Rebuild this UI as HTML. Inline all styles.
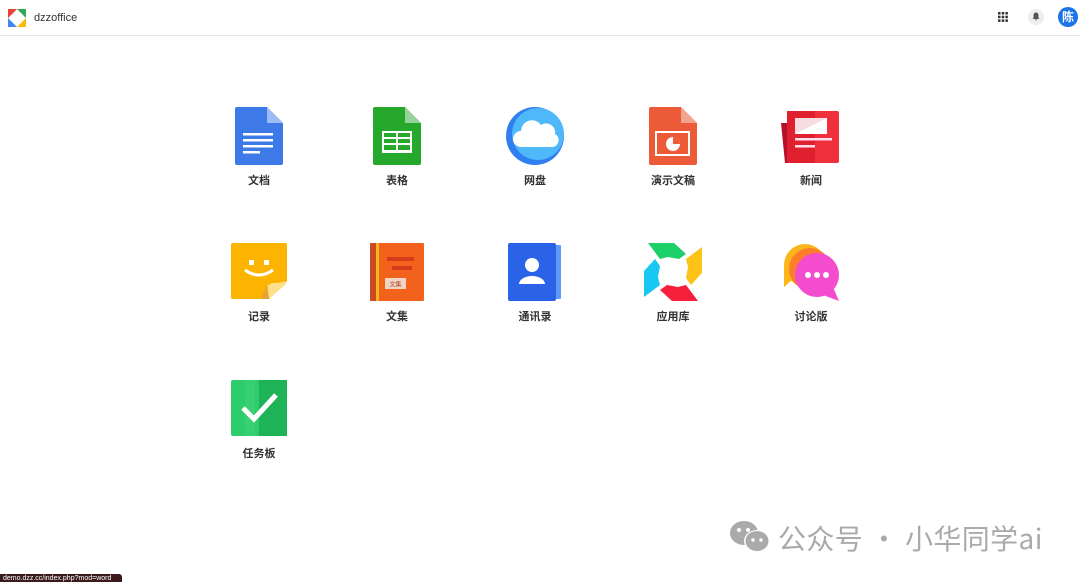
<!DOCTYPE html>
<html><head><meta charset="utf-8"><style>
*{margin:0;padding:0;box-sizing:border-box}
body{width:1080px;height:582px;background:#fff;font-family:"Liberation Sans","Noto Sans CJK SC",sans-serif;position:relative;overflow:hidden}
.hdr{height:36px;border-bottom:1px solid #e8e8e8;position:relative}
.app{position:absolute;width:100px;text-align:center}
.app svg{display:block;margin:0 auto}
.app span{display:block;font-size:11px;font-weight:bold;color:#333;margin-top:7px}
</style></head><body>
<div class="hdr">
<svg style="position:absolute;left:8px;top:9px" width="18" height="18" viewBox="0 0 18 18"><rect width="18" height="18" fill="#fff"/><polygon points="0,0 9,0 0,9" fill="#ea4335"/><polygon points="9,0 18,0 18,9" fill="#34a853"/><polygon points="18,9 18,18 9,18" fill="#fbbc05"/><polygon points="0,9 0,18 9,18" fill="#4285f4"/><polygon points="9,4 4,9 9,14 14,9" fill="#fff"/><polygon points="0,0 9,0 4,5 0,9" fill="#ea4335"/></svg>
<div style="position:absolute;left:34px;top:12px;font-size:11px;color:#333">dzzoffice</div>
<svg style="position:absolute;left:998px;top:12px" width="10" height="10"><g fill="#333"><rect x="0" y="0" width="2.5" height="2.5"/><rect x="3.7" y="0" width="2.5" height="2.5"/><rect x="7.4" y="0" width="2.5" height="2.5"/><rect x="0" y="3.7" width="2.5" height="2.5"/><rect x="3.7" y="3.7" width="2.5" height="2.5"/><rect x="7.4" y="3.7" width="2.5" height="2.5"/><rect x="0" y="7.4" width="2.5" height="2.5"/><rect x="3.7" y="7.4" width="2.5" height="2.5"/><rect x="7.4" y="7.4" width="2.5" height="2.5"/></g></svg>
<div style="position:absolute;left:1028px;top:9px;width:16px;height:16px;border-radius:50%;background:#eee"></div>
<svg style="position:absolute;left:1032px;top:12px" width="8" height="9" viewBox="0 0 8 9"><path d="M4 0.5C2.3 0.5 1.5 1.8 1.5 3.5V6L0.5 7H7.5L6.5 6V3.5C6.5 1.8 5.7 0.5 4 0.5ZM3 7.5H5A1 1 0 0 1 3 7.5Z" fill="#555"/></svg>
<div style="position:absolute;left:1058px;top:7px;width:20px;height:20px;border-radius:50%;background:#1a73e8;color:#fff;font-size:12px;font-weight:bold;text-align:center;line-height:20px">陈</div>
</div>

<div class="app" style="left:209px;top:107px"><svg width="48" height="58" viewBox="0 0 48 58"><path d="M2 0H32L48 16V56a2 2 0 0 1-2 2H2a2 2 0 0 1-2-2V2a2 2 0 0 1 2-2z" fill="#3d7ae8"/><path d="M32 0L48 16H32z" fill="#9dbcf5"/><g fill="#fff"><rect x="8" y="26" width="30" height="2.5"/><rect x="8" y="32" width="30" height="2.5"/><rect x="8" y="38" width="30" height="2.5"/><rect x="8" y="44" width="17" height="2.5"/></g></svg><span>文档</span></div>
<div class="app" style="left:347px;top:107px"><svg width="48" height="58" viewBox="0 0 48 58"><path d="M2 0H32L48 16V56a2 2 0 0 1-2 2H2a2 2 0 0 1-2-2V2a2 2 0 0 1 2-2z" fill="#25a82c"/><path d="M32 0L48 16H32z" fill="#94d39a"/><rect x="9" y="24" width="30" height="22" fill="#fff"/><g fill="#25a82c"><rect x="11" y="26" width="12" height="4"/><rect x="25" y="26" width="12" height="4"/><rect x="11" y="32" width="12" height="4"/><rect x="25" y="32" width="12" height="4"/><rect x="11" y="38" width="12" height="5"/><rect x="25" y="38" width="12" height="5"/></g></svg><span>表格</span></div>
<div class="app" style="left:485px;top:107px"><svg width="60" height="58" viewBox="0 0 60 58"><circle cx="30" cy="29" r="29" fill="#2f7ff0"/><circle cx="33" cy="27" r="26" fill="#4fb8fb"/><path d="M16 40a8 8 0 0 1 0-16a11 11 0 0 1 20-6a9 9 0 0 1 14 9a7 7 0 0 1-2 13z" fill="#fff"/></svg><span>网盘</span></div>
<div class="app" style="left:623px;top:107px"><svg width="48" height="58" viewBox="0 0 48 58"><path d="M2 0H32L48 16V56a2 2 0 0 1-2 2H2a2 2 0 0 1-2-2V2a2 2 0 0 1 2-2z" fill="#ec5a37"/><path d="M32 0L48 16H32z" fill="#f3a48f"/><rect x="7" y="25" width="33" height="23" fill="none" stroke="#fff" stroke-width="2"/><circle cx="24" cy="37" r="7" fill="#fff"/><path d="M24 37V30A7 7 0 0 1 31 37z" fill="#ec5a37"/></svg><span>演示文稿</span></div>
<div class="app" style="left:761px;top:107px"><svg width="60" height="58" viewBox="0 0 60 58"><path d="M0 16H6V56H4z" fill="#b3132a"/><rect x="6" y="4" width="52" height="52" rx="2" fill="#f0303a"/><rect x="6" y="4" width="28" height="52" fill="#e0202e"/><rect x="14" y="11" width="32" height="16" fill="#f5dde2"/><path d="M14 27L46 11V27z" fill="#fff"/><rect x="14" y="31" width="37" height="2.5" fill="#fde"/><rect x="14" y="38" width="20" height="2.5" fill="#fde"/></svg><span>新闻</span></div>

<div class="app" style="left:209px;top:243px"><svg width="56" height="58" viewBox="0 0 56 58"><path d="M2 0H54a2 2 0 0 1 2 2V38L38 56H2a2 2 0 0 1-2-2V2a2 2 0 0 1 2-2z" fill="#fcb400"/><path d="M56 38L38 56L36 42z" fill="#ffd96a"/><path d="M38 56V44A4 4 0 0 1 42 40H56z" fill="#fde08a"/><path d="M36 42L38 56L30 56z" fill="#e5a236"/><rect x="18" y="17" width="5" height="5" fill="#fff"/><rect x="33" y="17" width="5" height="5" fill="#fff"/><path d="M14 27Q28 37 42 27" stroke="#fff" stroke-width="3" fill="none"/></svg><span>记录</span></div>
<div class="app" style="left:347px;top:243px"><svg width="54" height="58" viewBox="0 0 54 58"><rect width="54" height="58" rx="1" fill="#f3621d"/><rect width="6" height="58" fill="#c94a25"/><rect x="6" width="3" height="58" fill="#f6b51b"/><rect x="17" y="14" width="27" height="4" fill="#d33d1c"/><rect x="22" y="23" width="20" height="4" fill="#d33d1c"/><rect x="15" y="35" width="21" height="11" fill="#f1d4c4"/><text x="25.5" y="43.5" font-size="6" text-anchor="middle" fill="#b04020" font-family="Noto Sans CJK SC,sans-serif">文集</text></svg><span>文集</span></div>
<div class="app" style="left:485px;top:243px"><svg width="54" height="58" viewBox="0 0 54 58"><rect x="46" y="2" width="7" height="54" rx="1" fill="#5f9af7"/><rect width="48" height="58" rx="2" fill="#2b63e8"/><circle cx="24" cy="22" r="7" fill="#fff"/><path d="M11 41a13 8 0 0 1 26 0z" fill="#fff"/></svg><span>通讯录</span></div>
<div class="app" style="left:623px;top:243px"><svg width="58" height="58" viewBox="0 0 58 58"><polygon points="4,0 30,0 42,11 35,16 24,14 16,16" fill="#1dd06a"/><polygon points="58,4 58,30 47,42 42,35 44,24 42,16" fill="#fdc318"/><polygon points="54,58 28,58 16,47 23,42 34,44 42,42" fill="#f6203d"/><polygon points="0,54 0,28 11,16 16,23 14,34 16,42" fill="#18c7f2"/><circle cx="29" cy="29" r="9" fill="#fff"/></svg><span>应用库</span></div>
<div class="app" style="left:761px;top:243px"><svg width="60" height="58" viewBox="0 0 60 58"><circle cx="24" cy="22" r="21" fill="#fdb51c"/><path d="M3 24L3 44L12 36z" fill="#fdb51c"/><circle cx="29" cy="26" r="21" fill="#fb7f2b"/><circle cx="36" cy="32" r="22" fill="#f34dce"/><path d="M52 44L58 58L42 52z" fill="#f34dce"/><circle cx="27" cy="32" r="3" fill="#fff"/><circle cx="36" cy="32" r="3" fill="#fff"/><circle cx="45" cy="32" r="3" fill="#fff"/></svg><span>讨论版</span></div>

<div class="app" style="left:209px;top:380px"><svg width="56" height="56" viewBox="0 0 56 56"><rect width="56" height="56" rx="2" fill="#2ecc6a"/><rect x="28" width="28" height="56" fill="#1eb356"/><rect x="14" y="0" width="10" height="56" fill="#42d47a" opacity=".5"/><path d="M12 28L23 39L45 15" stroke="#fff" stroke-width="5" fill="none"/></svg><span style="margin-top:9px">任务板</span></div>

<div style="position:absolute;left:729px;top:519px;width:42px;height:36px">
<svg width="42" height="36" viewBox="0 0 42 36"><ellipse cx="15" cy="14" rx="14" ry="12" fill="#aaa"/><ellipse cx="28" cy="22" rx="13" ry="11" fill="#fff"/><ellipse cx="28" cy="22" rx="11.5" ry="10" fill="#aaa"/><circle cx="10" cy="11" r="2" fill="#fff"/><circle cx="19" cy="11" r="2" fill="#fff"/><circle cx="24" cy="21" r="1.7" fill="#fff"/><circle cx="32" cy="21" r="1.7" fill="#fff"/></svg></div>
<div style="position:absolute;left:778px;top:520px;font-size:28px;color:#aaa;font-family:'Noto Sans CJK SC',sans-serif;line-height:36px;white-space:nowrap;letter-spacing:0.4px">公众号 · 小华同学ai</div>

<div style="position:absolute;left:0;top:574px;width:122px;height:8px;background:#3a1a1a;border-radius:0 3px 0 0;color:#fff;font-size:7px;line-height:9px;padding-left:3px;overflow:hidden;white-space:nowrap">demo.dzz.cc/index.php?mod=word</div>
</body></html>
